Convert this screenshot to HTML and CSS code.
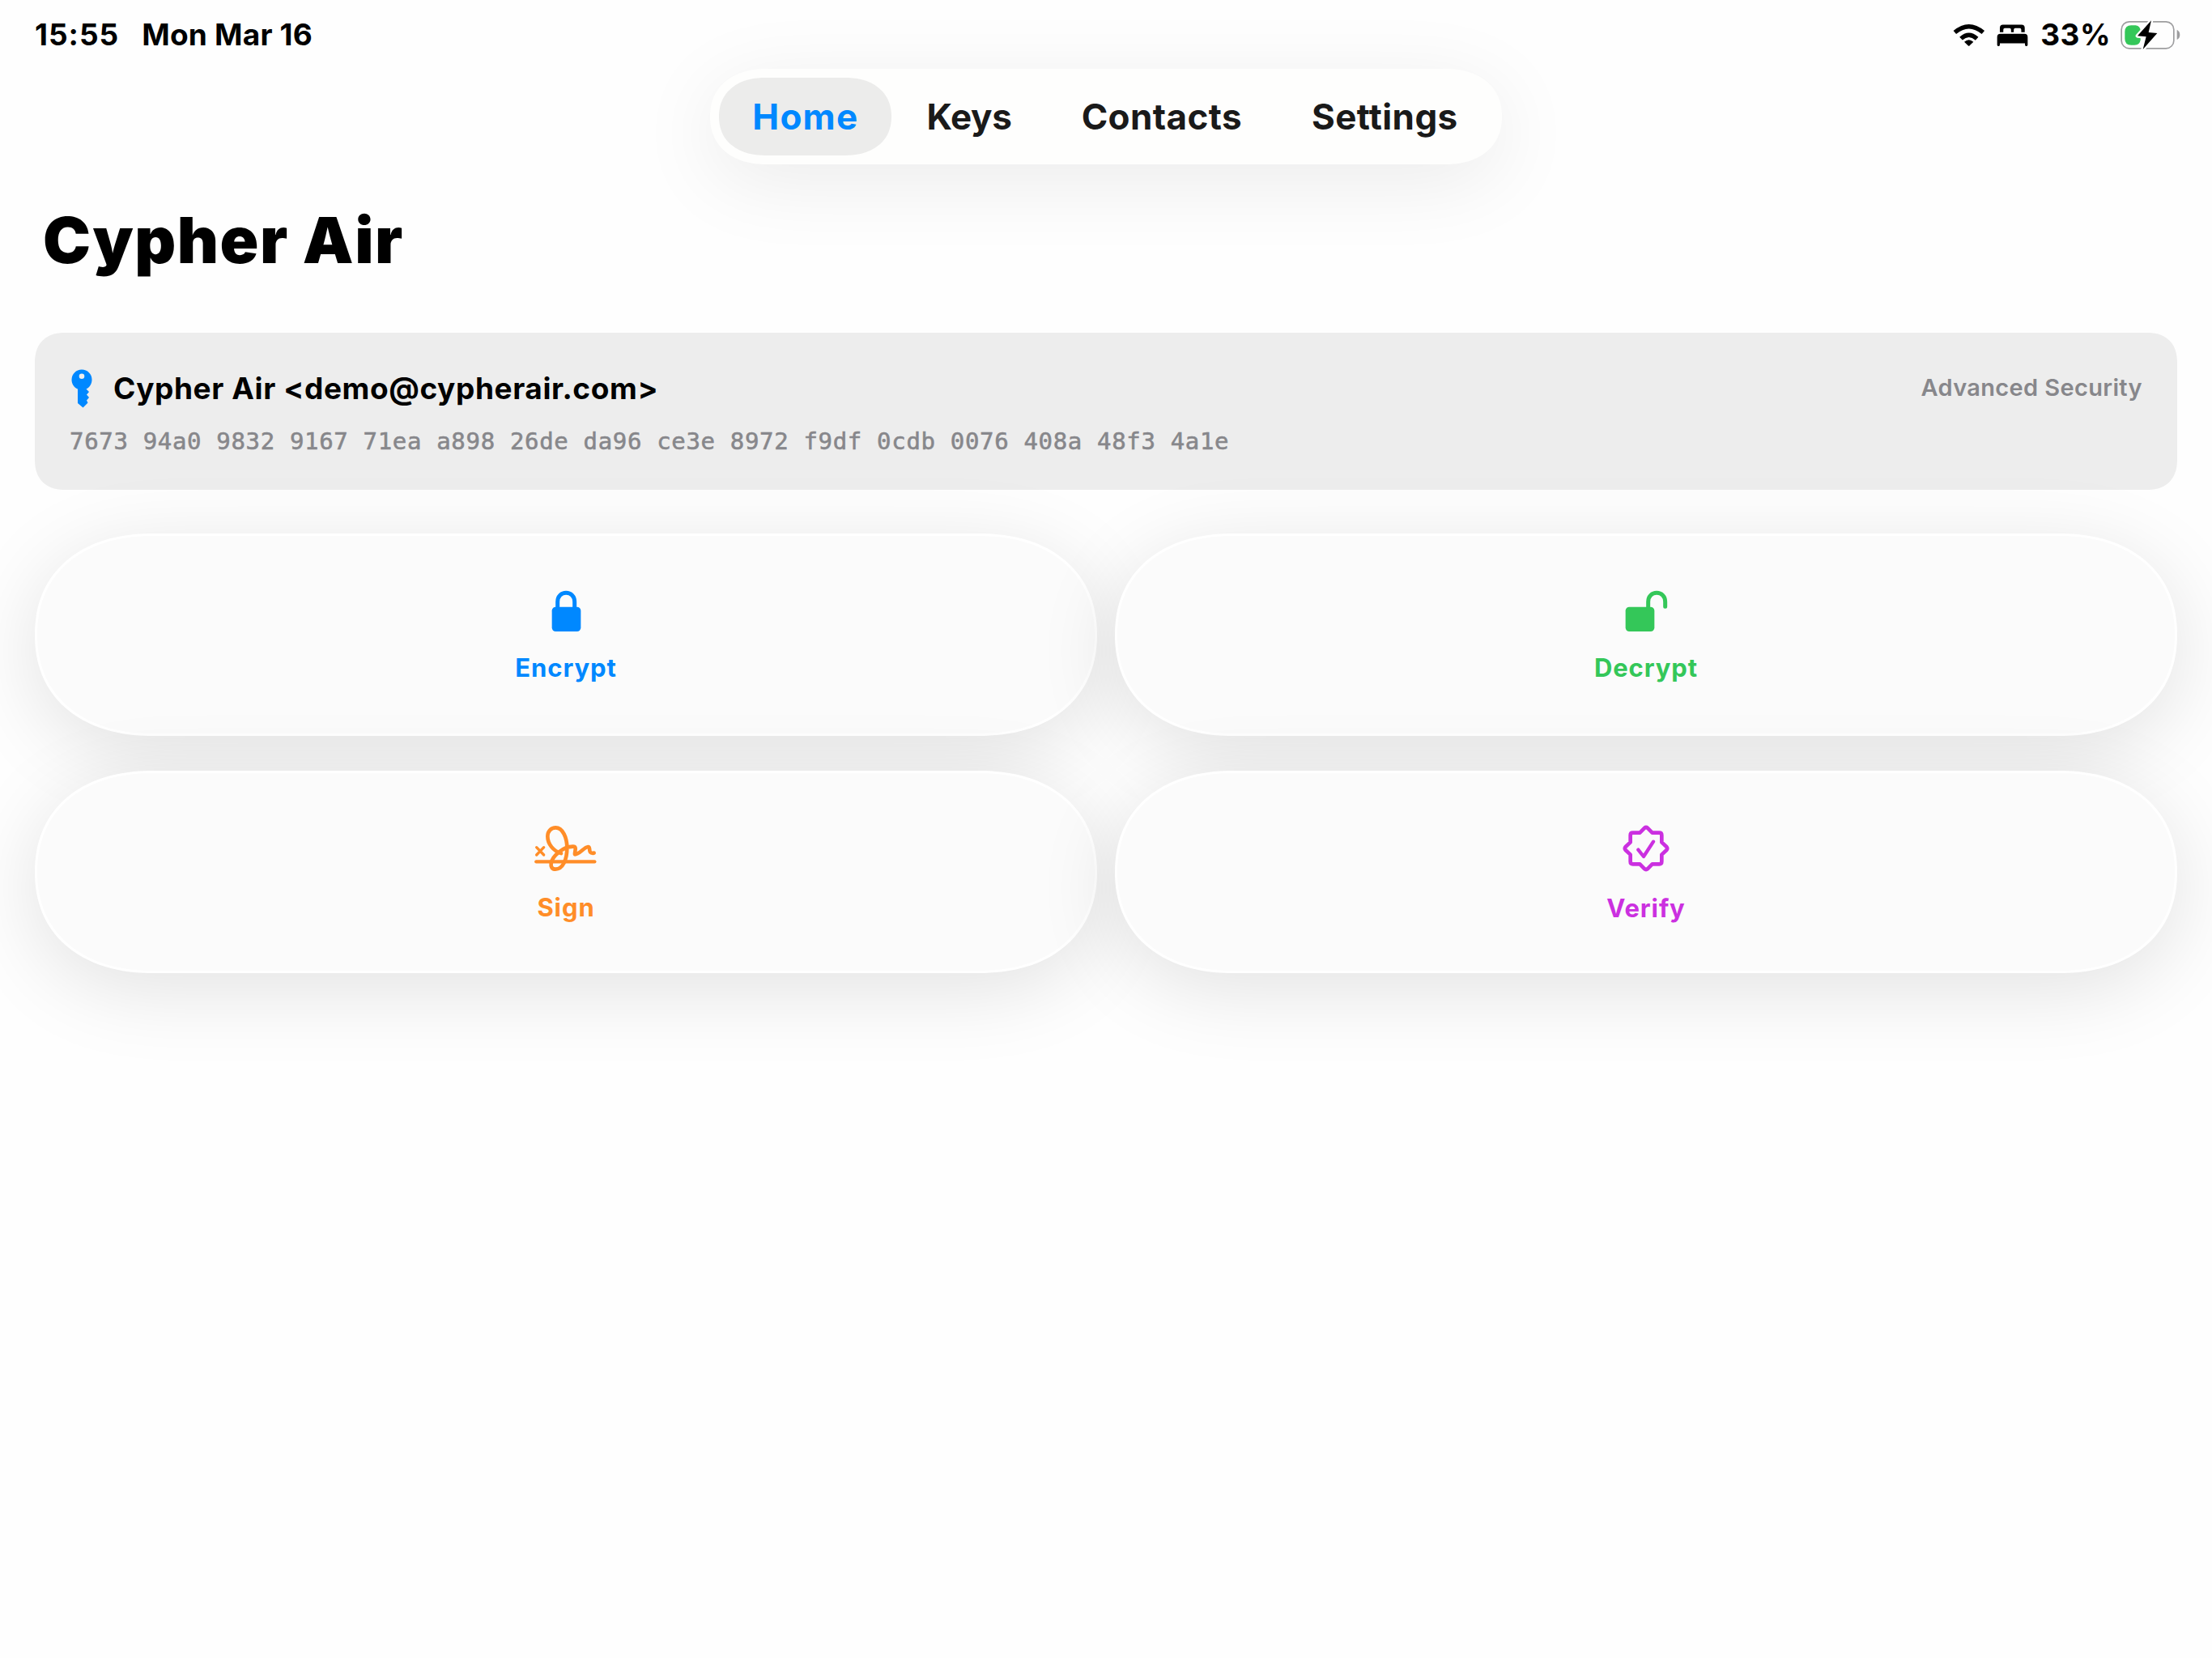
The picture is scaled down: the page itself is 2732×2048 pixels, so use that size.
FILE: index.html
```html
<!DOCTYPE html>
<html lang="en">
<head>
  <meta charset="UTF-8" />
  <meta name="viewport" content="width=device-width, initial-scale=1.0" />
  <title>Cypher Air</title>
  <link rel="stylesheet" href="styles.css">
</head>
<body>

  <div class="status-bar">
    <span class="time">15:55</span>
    <span class="date">Mon Mar 16</span>
    <div class="status-icons">
      <svg class="wifi" viewBox="96 84 120 84">
        <path d="M103 117Q155 73 208 117M126 140Q155 113 185 140" fill="none" stroke="#000" stroke-width="16" />
        <path d="M138 152Q155 137 172 152L158 166Q155 169 152 166Z" />
      </svg>
      <svg class="bed" viewBox="258 84 118 84">
        <path fill-rule="evenodd" d="M270 116V100Q270 88 282 88H351Q363 88 363 100V116H350V107Q350 101 344 101H328Q322 101 322 107V116H312V107Q312 101 306 101H289Q283 101 283 107V116Z" />
        <path d="M260 164V134Q260 122 272 122H362Q374 122 374 134V164Q374 168 370 168H368Q364 168 364 164V158H270V164Q270 168 266 168H264Q260 168 260 164Z" />
      </svg>
      <span class="percent">33%</span>
      <svg class="battery" viewBox="716 70 222 114">
        <rect x="719.500" y="78.500" width="194" height="99" rx="29" fill="none" stroke="#9d9d9f" stroke-width="5" />
        <path d="M925 108Q936 114 936 127T925 145Z" fill="#9d9d9f" />
        <path d="M756 92H772Q790 94 790 114V146Q788 165 768 165H756Q732 165 732 141V116Q732 92 756 92Z" fill="#34c759" />
        <path d="M830 74L779 131L811 134L799 181L852 121L820 118Z" fill="#000" stroke="#fefefe" stroke-width="14" stroke-linejoin="round" paint-order="stroke" />
      </svg>
    </div>
  </div>

  <nav class="tabs">
    <a class="tab active">Home</a>
    <a class="tab keys">Keys</a>
    <a class="tab">Contacts</a>
    <a class="tab">Settings</a>
  </nav>

  <main>
    <h1>Cypher Air</h1>

    <section class="identity">
      <div class="identity-row">
        <svg class="key" viewBox="0 0 26 48">
          <path fill-rule="evenodd" d="M13 0.500C20 0.500 25.500 6 25.500 13C25.500 18.500 22.500 22.500 18.500 24.500L22 28L19 31.500L22 35L19 38.500L20.500 41.500L14.500 47.500L8 42V24.500C3.500 22.500 0.500 18.500 0.500 13C0.500 6 6 0.500 13 0.500ZM13 5.500A3.300 3.300 0 1 0 13 12.100A3.300 3.300 0 1 0 13 5.500Z" />
        </svg>
        <h2>Cypher Air &lt;demo@cypherair.com&gt;</h2>
        <span class="profile">Advanced Security</span>
      </div>
      <p class="fingerprint">7673 94a0 9832 9167 71ea a898 26de da96 ce3e 8972 f9df 0cdb 0076 408a 48f3 4a1e</p>
    </section>

    <div class="actions">
      <button class="action encrypt">
        <svg viewBox="177 75 240 180">
          <rect x="245" y="149" width="107" height="91" rx="14" />
          <path class="line" d="M266 156V130C266 110 280 97 297.500 97S329 110 329 130V156" stroke-width="15" />
        </svg>
        <span>Encrypt</span>
      </button>

      <button class="action decrypt">
        <svg viewBox="159 75 240 180">
          <rect x="203" y="149" width="107" height="91" rx="14" />
          <path class="line" d="M287 156V130C287 110 301 97 318.500 97S350 110 350 130V148" stroke-width="15" />
        </svg>
        <span>Decrypt</span>
      </button>

      <button class="action sign">
        <svg viewBox="177 84 240 180">
          <path class="line" d="M188 170L215 198M215 170L188 198" stroke-width="10" />
          <path class="line" d="M187 223H403" stroke-width="13" />
          <path class="line" d="M279 192C251 184 229 158 229 129C229 110 242 97 259 97C285 97 301 134 301 172C301 216 285 251 258 251C246 251 240 243 242 229C247 202 286 167 323 167C339 167 329 184 330 196C347 196 364 169 379 168C391 168 375 195 401 191" stroke-width="14" />
        </svg>
        <span>Sign</span>
      </button>

      <button class="action verify">
        <svg viewBox="159 84 240 180">
          <path class="line" d="M273 98.500Q279 93.500 285 98.500L302 116H328Q337 116 337 125V151L355 168Q360 174 355 180L337 197V223Q337 232 328 232H302L285 249.500Q279 254.500 273 249.500L256 232H230Q221 232 221 223V197L203 180Q198 174 203 168L221 151V125Q221 116 230 116H256Z" stroke-width="14" />
          <path class="line" d="M250 179L270 204L306 149" stroke-width="13" />
        </svg>
        <span>Verify</span>
      </button>
    </div>
  </main>

</body>
</html>
```
FILE: styles.css
```css
:root {
  --bg: #fefefe;
  --blue: #0088ff;
  --green: #34c759;
  --orange: #ff8d28;
  --purple: #cb30e0;
  --gray: #87878b;
}

* {
  box-sizing: border-box;
}

body {
  font-family: Inter, "Liberation Sans", sans-serif;
  margin: 0;
  min-height: 2048px;
  background: var(--bg);
  color: #000;
}

.status-bar {
  display: flex;
  align-items: center;
  height: 85px;
  padding: 0 39px 0 43px;
  font-size: 37px;
  line-height: 44px;
  font-weight: 650;
}

.time {
  letter-spacing: 1px;
}

.date {
  margin-left: 28px;
  letter-spacing: 0.2px;
}

.status-icons {
  display: flex;
  align-items: center;
  margin-left: auto;
}

.wifi {
  width: 40px;
  height: 28px;
}

.bed {
  width: 39px;
  height: 28px;
  margin-left: 14px;
}

.percent {
  margin-left: 15px;
  letter-spacing: 0.5px;
}

.battery {
  width: 74px;
  height: 38px;
  margin-left: 12px;
}

.tabs {
  display: flex;
  width: fit-content;
  margin: 0 auto;
  padding: 11px;
  border-radius: 70px / 59px;
  corner-shape: superellipse(1.15);
  background: #fefefd;
  box-shadow: 0 20px 100px rgba(0,0,0,0.08);
}

.tab {
  padding: 0 43px;
  border-radius: 57px / 48px;
  corner-shape: superellipse(1.15);
  font-size: 44px;
  line-height: 96px;
  font-weight: 650;
  letter-spacing: 0.4px;
  color: #1a1a1a;
}

.tab.active {
  padding: 0 41px;
  background: #ececeb;
  font-weight: 720;
  letter-spacing: 1.2px;
  color: var(--blue);
}

.tab.keys {
  letter-spacing: -0.3px;
}

main {
  padding: 0 43px;
}

h1 {
  margin: 45px 0 0 10px;
  font-size: 79px;
  line-height: 96px;
  font-weight: 900;
  letter-spacing: 1.5px;
}

.identity {
  height: 194px;
  margin-top: 67px;
  padding: 46px 43px 0;
  border-radius: 38px;
  corner-shape: superellipse(1.25);
  background: #ededed;
}

.identity-row {
  display: flex;
  align-items: center;
  height: 44px;
}

.key {
  width: 26px;
  height: 48px;
  margin: 1px 0 0 2px;
  fill: var(--blue);
}

h2 {
  margin: 2px 0 0 26px;
  font-size: 37px;
  line-height: 44px;
  font-weight: 750;
  letter-spacing: 0.6px;
}

.profile {
  margin-left: auto;
  font-size: 29px;
  line-height: 44px;
  font-weight: 580;
  letter-spacing: 0.35px;
  color: var(--gray);
}

.fingerprint {
  margin: 26px 0 0;
  font-family: "DejaVu Sans Mono", "Liberation Mono", monospace;
  font-size: 29px;
  line-height: 36px;
  letter-spacing: 0.67px;
  white-space: nowrap;
  color: var(--gray);
  -webkit-text-stroke: 0.6px var(--gray);
}

.actions {
  display: grid;
  grid-template-columns: 1fr 1fr;
  gap: 43px 22px;
  margin-top: 54px;
}

.action {
  display: flex;
  flex-direction: column;
  align-items: center;
  justify-content: flex-start;
  height: 250px;
  padding: 63px 0 0;
  border: 3px solid #fff;
  border-radius: 146px / 125px;
  corner-shape: superellipse(1.15);
  background: #fbfbfb;
  box-shadow: 0 20px 100px rgba(0,0,0,0.115);
  font-family: inherit;
  font-size: 31px;
  line-height: 36px;
  font-weight: 670;
  letter-spacing: 0.9px;
}

.action svg {
  width: 80px;
  height: 60px;
  fill: currentColor;
}

.action .line {
  fill: none;
  stroke: currentColor;
  stroke-linecap: round;
  stroke-linejoin: round;
}

.action span {
  margin-top: 22px;
}

.encrypt {
  color: var(--blue);
}

.decrypt {
  color: var(--green);
}

.sign {
  color: var(--orange);
}

.sign span {
  margin-top: 25px;
}

.verify {
  color: var(--purple);
}

.verify span {
  margin-top: 26px;
}
```
